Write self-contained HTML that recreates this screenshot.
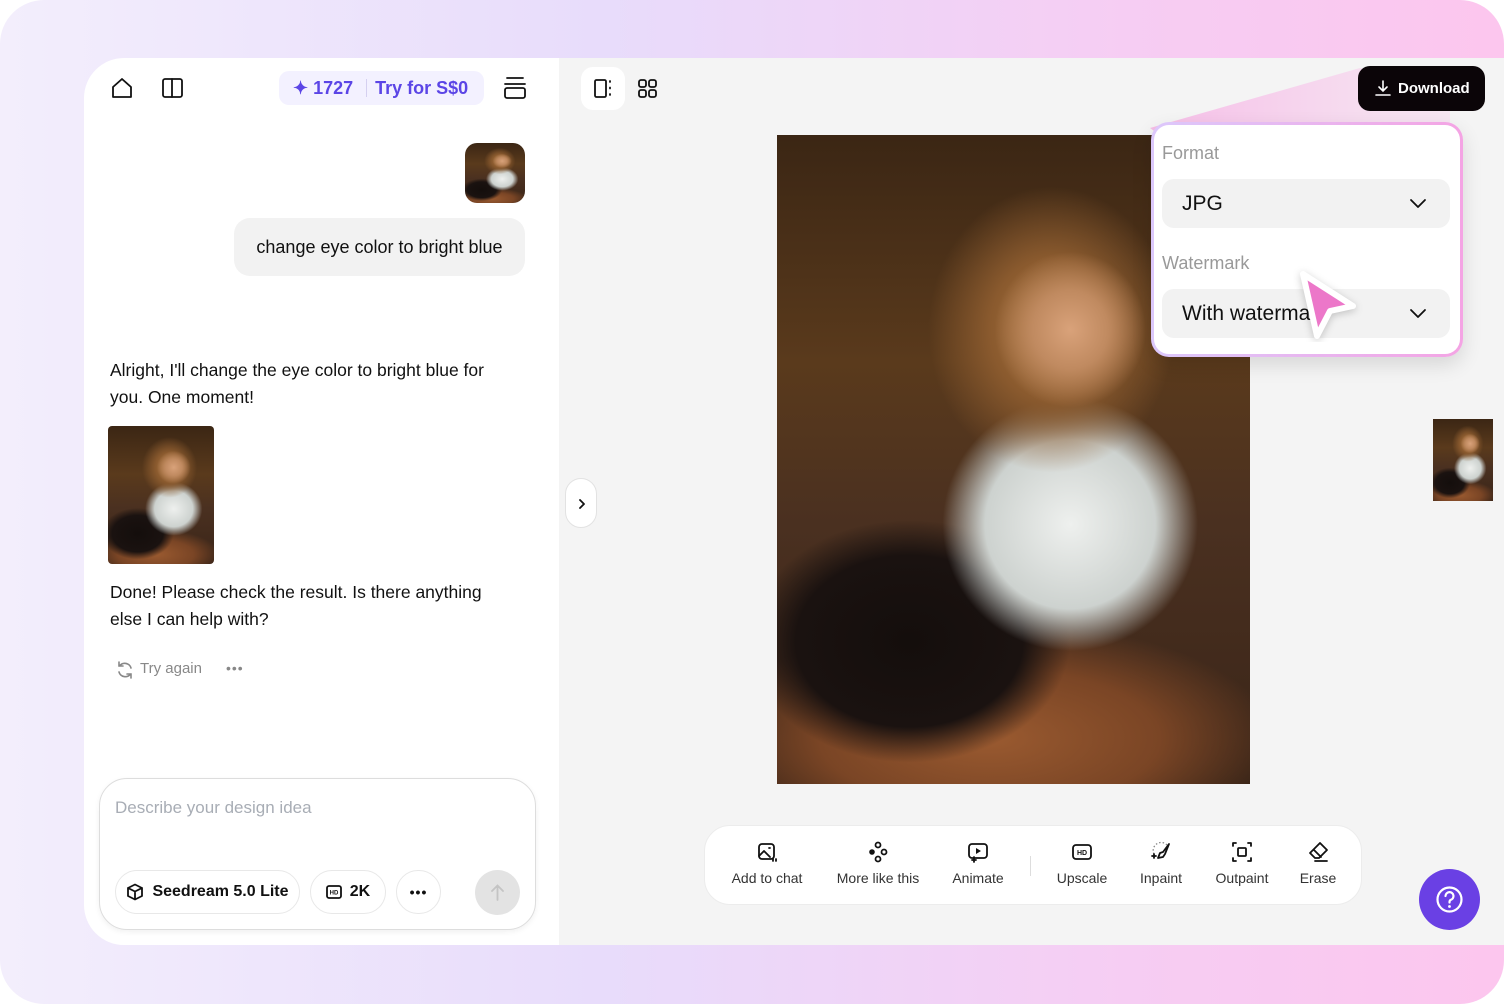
<!DOCTYPE html>
<html><head><meta charset="utf-8"><style>
*{box-sizing:border-box;margin:0;padding:0}
body{width:1504px;height:1004px;overflow:hidden;font-family:"Liberation Sans",sans-serif;background:#fff}
.outer{position:absolute;left:0;top:0;width:1504px;height:1004px;border-radius:44px;background:linear-gradient(90deg,#f3eefc 0%,#e8dcfb 40%,#f6cdf3 75%,#fcc6ee 100%)}
.left{position:absolute;left:84px;top:58px;width:475px;height:887px;background:#fff;border-radius:40px 0 0 40px}
.right{position:absolute;left:559px;top:58px;width:945px;height:887px;background:#f4f4f4}
.abs{position:absolute}
.t{color:#111;font-size:17.5px;line-height:27px}
.photo{position:absolute;overflow:hidden;background:
radial-gradient(ellipse 16% 12% at 62% 30%,#d9a27a 0,#c08a60 50%,transparent 100%),
radial-gradient(ellipse 26% 22% at 58% 30%,#a8743e 0,#8a5a2e 50%,transparent 100%),
radial-gradient(ellipse 36% 26% at 62% 60%,#eef0ee 0,#cdd2cf 50%,transparent 75%),
radial-gradient(ellipse 40% 22% at 28% 78%,#140e0c 0,#1a1210 60%,transparent 85%),
radial-gradient(ellipse 60% 18% at 45% 93%,#9a5a30 0,#7a4525 60%,transparent 100%),
linear-gradient(180deg,#3b2614 0%,#5a3a1c 35%,#4a3020 60%,#3a2518 100%)}
.ic{stroke:#111;fill:none;stroke-width:1.8;stroke-linecap:round;stroke-linejoin:round}
.tb{position:absolute;top:870px;font-size:14px;color:#333;transform:translateX(-50%);white-space:nowrap}
.tbi{position:absolute;top:841px;transform:translateX(-50%)}
.pill{position:absolute;top:870px;height:44px;border:1px solid #e8e8e8;border-radius:22px;display:flex;align-items:center;justify-content:center;font-size:16px;font-weight:bold;color:#111;gap:8px}
</style></head><body>
<div class="outer"></div>
<div class="left"></div>
<div class="right"></div>

<svg class="abs" style="left:110px;top:76px" width="24" height="24" viewBox="0 0 24 24"><path class="ic" d="M3 11L12 3l9 8v10H3z"/></svg>
<svg class="abs" style="left:161px;top:77px" width="23" height="22" viewBox="0 0 23 22"><rect class="ic" x="2" y="2" width="19" height="18" rx="2"/><path class="ic" d="M11 2v18"/></svg>
<div class="abs" style="left:279px;top:71px;width:205px;height:34px;border-radius:10px;background:#f3f1ff;color:#5b45e6;font-weight:bold;font-size:18px;line-height:34px;padding-left:14px">✦ 1727 <span style="display:inline-block;width:1px;height:18px;background:#d5d0f0;vertical-align:-3px;margin:0 8px"></span>Try for S$0</div>
<svg class="abs" style="left:502px;top:75px" width="26" height="26" viewBox="0 0 26 26"><path class="ic" stroke-width="2.4" d="M5 3h16M3 9h20"/><rect class="ic" stroke-width="2.4" x="3" y="13" width="20" height="10" rx="2"/></svg>

<div class="photo" style="left:465px;top:143px;width:60px;height:60px;border-radius:12px"></div>
<div class="abs t" style="left:234px;top:218px;width:291px;height:58px;background:#f2f2f2;border-radius:16px;line-height:58px;text-align:center;font-size:18px">change eye color to bright blue</div>
<div class="abs t" style="left:110px;top:357px;width:405px">Alright, I'll change the eye color to bright blue for you. One moment!</div>
<div class="photo" style="left:108px;top:426px;width:106px;height:138px;border-radius:4px"></div>
<div class="abs t" style="left:110px;top:579px;width:400px">Done! Please check the result. Is there anything else I can help with?</div>
<svg class="abs" style="left:115px;top:660px" width="20" height="20" viewBox="0 0 20 20"><path fill="none" stroke="#888" stroke-width="1.6" stroke-linecap="round" d="M16 8a6.5 6.5 0 0 0-11.5-2M4 12a6.5 6.5 0 0 0 11.5 2M4 2v4h4M16 18v-4h-4"/></svg>
<div class="abs" style="left:140px;top:660px;font-size:15px;color:#888">Try again</div>
<div class="abs" style="left:226px;top:660px;font-size:14px;color:#888;letter-spacing:1px">•••</div>

<div class="abs" style="left:99px;top:778px;width:437px;height:152px;border:1px solid #ddd;border-radius:28px;background:#fff;box-shadow:0 2px 6px rgba(0,0,0,.06)"></div>
<div class="abs" style="left:115px;top:798px;font-size:17px;color:#a8adb5">Describe your design idea</div>
<div class="pill" style="left:115px;width:185px"><svg width="18" height="18" viewBox="0 0 18 18"><path class="ic" d="M9 1.5l7 3.5v8l-7 3.5-7-3.5V5zM2 5l7 3.5L16 5M9 8.5v8"/></svg>Seedream 5.0 Lite</div>
<div class="pill" style="left:310px;width:76px"><svg width="16" height="16" viewBox="0 0 16 16"><rect class="ic" x="1" y="2" width="14" height="12" rx="2"/><text x="8" y="10.5" font-size="6" font-weight="bold" text-anchor="middle" fill="#111" font-family="Liberation Sans">HD</text></svg>2K</div>
<div class="pill" style="left:396px;width:45px;font-size:14px;letter-spacing:1px">•••</div>
<div class="abs" style="left:475px;top:870px;width:45px;height:45px;border-radius:50%;background:#e3e3e3"><svg width="45" height="45" viewBox="0 0 45 45"><path fill="none" stroke="#c4c4c4" stroke-width="1.8" stroke-linecap="round" d="M22.5 30V16M17 21l5.5-5.5L28 21"/></svg></div>

<div class="abs" style="left:565px;top:478px;width:32px;height:50px;border:1px solid #e2e2e2;border-radius:16px;background:#fff"><svg width="32" height="50" viewBox="0 0 32 50"><path class="ic" stroke-width="1.6" d="M14 21l4 4-4 4"/></svg></div>

<div class="abs" style="left:581px;top:67px;width:44px;height:43px;background:#fff;border-radius:12px"><svg width="44" height="43" viewBox="0 0 44 43"><rect class="ic" x="14" y="13" width="11" height="17" rx="1.5"/><path class="ic" stroke-width="2" d="M29 14v1M29 20.5v1M29 27v1"/></svg></div>
<svg class="abs" style="left:637px;top:78px" width="22" height="22" viewBox="0 0 22 22"><rect class="ic" x="2" y="2" width="7" height="7" rx="2"/><rect class="ic" x="12" y="2" width="7" height="7" rx="2"/><rect class="ic" x="2" y="12" width="7" height="7" rx="2"/><rect class="ic" x="12" y="12" width="7" height="7" rx="2"/></svg>

<div class="photo" style="left:777px;top:135px;width:473px;height:649px"></div>
<div class="photo" style="left:1433px;top:419px;width:60px;height:82px"></div>

<svg class="abs" style="left:1150px;top:58px" width="354" height="300"><defs><linearGradient id="bm" x1="0" y1="0" x2="1" y2="0"><stop offset="0" stop-color="#f6b7e6" stop-opacity=".9"/><stop offset="1" stop-color="#f8d7ef" stop-opacity=".5"/></linearGradient></defs><path d="M0 70L210 10 300 30 300 290z" fill="url(#bm)"/></svg>

<div class="abs" style="left:1358px;top:66px;width:127px;height:45px;background:#0b0508;border-radius:12px;color:#fff;font-size:15px;font-weight:bold;line-height:45px;padding-left:40px">Download</div>
<svg class="abs" style="left:1374px;top:79px" width="18" height="18" viewBox="0 0 18 18"><path fill="none" stroke="#fff" stroke-width="1.6" stroke-linecap="round" d="M9 2v10M5 8l4 4 4-4M2 16h14"/></svg>

<div class="abs" style="left:1151px;top:122px;width:312px;height:235px;border-radius:18px;background:linear-gradient(90deg,#dcc8fb,#f4a4e4);padding:3px;box-shadow:0 8px 20px rgba(0,0,0,.12)"><div style="width:100%;height:100%;background:#fff;border-radius:15px"></div></div>
<div class="abs" style="left:1162px;top:143px;font-size:18px;color:#999">Format</div>
<div class="abs" style="left:1162px;top:179px;width:288px;height:49px;background:#f2f2f2;border-radius:12px;font-size:21px;color:#111;line-height:49px;padding-left:20px">JPG</div>
<div class="abs" style="left:1162px;top:253px;font-size:18px;color:#999">Watermark</div>
<div class="abs" style="left:1162px;top:289px;width:288px;height:49px;background:#f2f2f2;border-radius:12px;font-size:21px;color:#111;line-height:49px;padding-left:20px">With watermark</div>
<svg class="abs" style="left:1408px;top:194px" width="20" height="20"><path class="ic" stroke-width="2" d="M3 6l7 7 7-7"/></svg>
<svg class="abs" style="left:1408px;top:304px" width="20" height="20"><path class="ic" stroke-width="2" d="M3 6l7 7 7-7"/></svg>
<svg class="abs" style="left:1293px;top:262px" width="75" height="80"><path d="M10 12L60 44 37 49 24 74z" fill="#ec77c9" stroke="#fff" stroke-width="6" stroke-linejoin="round" style="filter:drop-shadow(0 2px 4px rgba(0,0,0,.2))"/></svg>

<div class="abs" style="left:704px;top:825px;width:658px;height:80px;background:#fff;border:1px solid #ececec;border-radius:26px"></div>
<div class="abs" style="left:1030px;top:856px;width:1px;height:20px;background:#ddd"></div>
<svg class="tbi" style="left:767px" width="22" height="22" viewBox="0 0 22 22"><rect class="ic" x="3" y="3" width="15" height="15" rx="3"/><path class="ic" d="M3 15l5-5 6 6M13 7h1M17 18v2M20 18v2"/></svg><div class="tb" style="left:767px">Add to chat</div>
<svg class="tbi" style="left:878px" width="22" height="22" viewBox="0 0 22 22"><circle class="ic" cx="11" cy="4" r="2.5"/><circle cx="5" cy="11" r="2.8" fill="#111"/><circle class="ic" cx="17" cy="11" r="2.5"/><circle class="ic" cx="11" cy="18" r="2.5"/></svg><div class="tb" style="left:878px">More like this</div>
<svg class="tbi" style="left:978px" width="22" height="22" viewBox="0 0 22 22"><rect class="ic" x="2" y="3" width="18" height="14" rx="3"/><path d="M9 7l5 3-5 3z" fill="#111"/><path class="ic" d="M7 16v5M5 19h4"/></svg><div class="tb" style="left:978px">Animate</div>
<svg class="tbi" style="left:1082px" width="22" height="22" viewBox="0 0 22 22"><rect class="ic" x="2" y="4" width="18" height="14" rx="3"/><text x="11" y="14" font-size="7" font-weight="bold" text-anchor="middle" fill="#111" font-family="Liberation Sans">HD</text></svg><div class="tb" style="left:1082px">Upscale</div>
<svg class="tbi" style="left:1161px" width="22" height="22" viewBox="0 0 22 22"><path fill="none" stroke="#888" stroke-width="1.3" stroke-dasharray="1.5 2" d="M4 13A8 8 0 0 1 17 4"/><path class="ic" d="M19 3l-6 8-3 1-2 5 5-1 2-3z M2 15h4M4 13v4"/></svg><div class="tb" style="left:1161px">Inpaint</div>
<svg class="tbi" style="left:1242px" width="22" height="22" viewBox="0 0 22 22"><rect class="ic" x="7" y="7" width="8" height="8" rx="1"/><path class="ic" d="M2 5V2h3M17 2h3v3M20 17v3h-3M5 20H2v-3"/></svg><div class="tb" style="left:1242px">Outpaint</div>
<svg class="tbi" style="left:1318px" width="22" height="22" viewBox="0 0 22 22"><path class="ic" d="M13 2l7 7-8 8H8l-5-5zM7 9l7 7M8 20h12"/></svg><div class="tb" style="left:1318px">Erase</div>

<div class="abs" style="left:1419px;top:869px;width:61px;height:61px;border-radius:50%;background:#6a40e4"><svg width="61" height="61" viewBox="0 0 61 61"><circle cx="30.5" cy="30.5" r="12" fill="none" stroke="#fff" stroke-width="2.2"/><path fill="none" stroke="#fff" stroke-width="2.2" stroke-linecap="round" d="M26.5 27a4 4 0 1 1 5 4c-1 .5-1 1.5-1 2.5"/><circle cx="30.5" cy="37.5" r="1.4" fill="#fff"/></svg></div>
</body></html>
